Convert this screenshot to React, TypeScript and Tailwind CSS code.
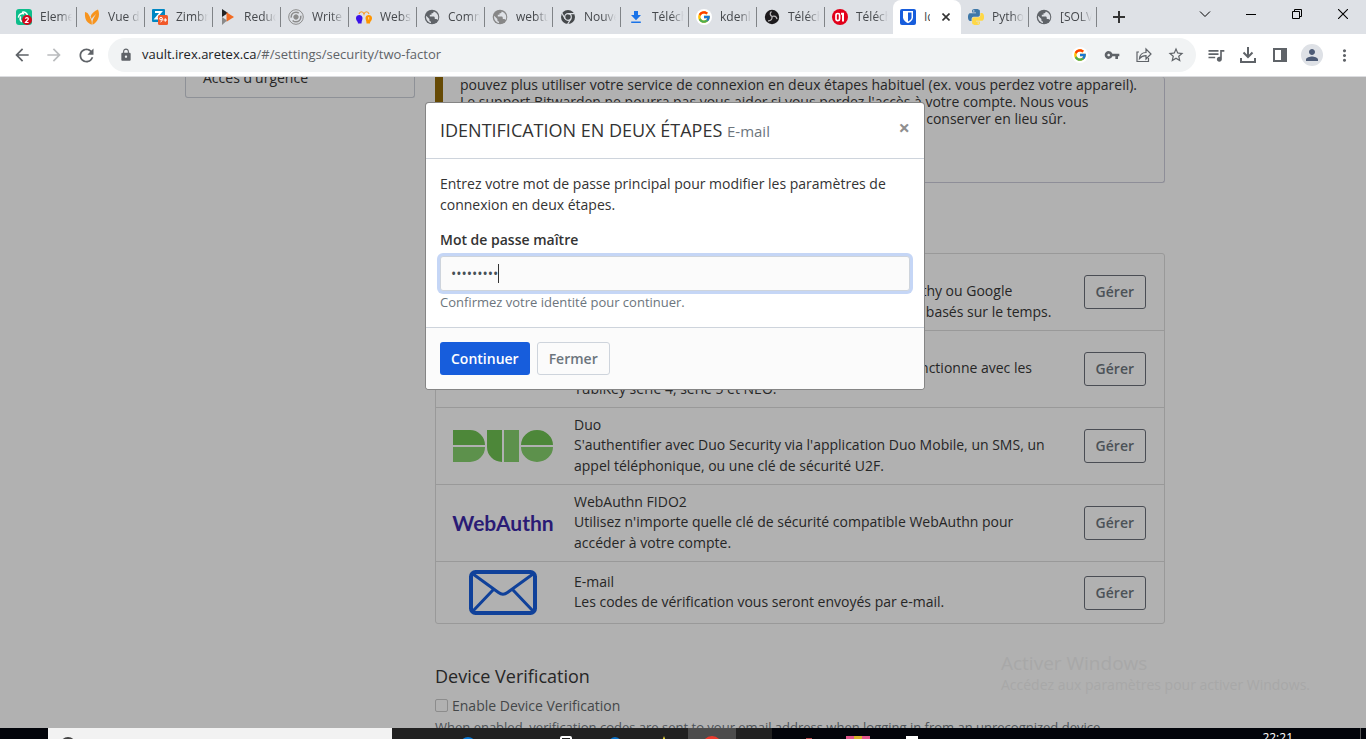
import React, { useEffect, useRef } from 'react';
import {
  MdArrowBack,
  MdArrowForward,
  MdLock,
  MdMoreVert,
  MdPerson,
  MdQueueMusic,
  MdRefresh,
  MdStarBorder,
  MdVpnKey,
} from 'react-icons/md';
import { FcGoogle } from 'react-icons/fc';

interface Tab {
  title: string;
  icon: React.ReactNode;
  active?: boolean;
  separator?: boolean;
}

interface Provider {
  name: string;
  description: string;
  logo: React.ReactNode;
}

const PYTHON_SNAKE =
  'M14.25.18l.9.2.73.26.59.3.45.32.34.34.25.34.16.33.1.3.04.26.02.2-.01.13V8.5l-.05.63-.13.55-.21.46-.26.38-.3.31-.33.25-.35.19-.35.14-.33.1-.3.07-.26.04-.21.02H8.77l-.69.05-.59.14-.5.22-.41.27-.33.32-.27.35-.2.36-.15.37-.1.35-.07.32-.04.27-.02.21v3.06H3.17l-.21-.03-.28-.07-.32-.12-.35-.18-.36-.26-.36-.36-.35-.46-.32-.59-.28-.73-.21-.88-.14-1.05-.05-1.23.06-1.22.16-1.04.24-.87.32-.71.36-.57.4-.44.42-.33.42-.24.4-.16.36-.1.32-.05.24-.01h.16l.06.01h8.16v-.83H6.18l-.01-2.75-.02-.37.05-.34.11-.31.17-.28.25-.26.31-.23.38-.2.44-.18.51-.15.58-.12.64-.1.71-.06.77-.04.84-.02 1.27.05zm-6.3 1.98l-.23.33-.08.41.08.41.23.34.33.22.41.09.41-.09.33-.22.23-.34.08-.41-.08-.41-.23-.33-.33-.22-.41-.09-.41.09z';

function ElementIcon() {
  return (
    <svg viewBox="0 0 16 16" className="size-4">
      <rect width="16" height="16" rx="3" fill="#0dbd8b" />
      <g fill="none" stroke="#fff" strokeWidth="1.5" strokeLinecap="round">
        <path d="M6.5 3.2a4 4 0 0 1 5 3.500M2.500 8a4 4 0 0 1 5-3.300M5.500 12.500a4 4 0 0 1-1-4.500" />
      </g>
      <circle cx="11" cy="11" r="5" fill="#d4061c" />
      <path d="M9.400 9.800c.2-1.600 3-1.500 2.900.1 0 1.200-2 2-2.900 3.600h3.200" fill="none" stroke="#fff" strokeWidth="1.2" />
    </svg>
  );
}

function LeafIcon() {
  return (
    <svg viewBox="0 0 16 16" className="size-4" fill="#f7941e">
      <path d="M1 3c2 .3 3.300 1.500 4.200 3.500L7.300 11c.6 1.800.7 3.500.4 4.800C5 14.500 2.500 13 1.600 10 .9 7.800.8 5.500 1 3z" />
      <path d="M14 .5c1.300 3 1.400 6.500 0 9.500-1 2.500-3 4.500-5.500 5.700C8.200 13 8.500 11 10 8.500L12 5 8.500 8.500 7.700 10 6.600 7.500C7.500 4.500 10.500 2 14 .5z" />
    </svg>
  );
}

function ZimbraIcon() {
  return (
    <svg viewBox="0 0 16 16" className="size-4">
      <rect width="13" height="13" rx="1" fill="#0087c3" />
      <path d="M3 3h6L3.500 9.500H7" fill="none" stroke="#fff" strokeWidth="1.8" />
      <rect x="6" y="6" width="10" height="10" rx="1.500" fill="#f1592a" />
      <circle cx="9" cy="9.600" r="1.300" fill="none" stroke="#fff" />
      <path d="M10.300 9.500c0 2-.5 3.200-1.800 3.500M11.500 11h3.500M13.250 9.250v3.500" fill="none" stroke="#fff" />
    </svg>
  );
}

function PlayIcon() {
  return (
    <svg viewBox="0 0 16 16" className="size-4">
      <path d="M2 0l6 4-6 4z" fill="#222" />
      <path d="M6.500 3.200l7.500 4.800-7.500 4.800z" fill="#f26a21" />
      <path d="M2 8l5 3.500L2 16z" fill="#8a8a8a" />
    </svg>
  );
}

function SwirlIcon() {
  return (
    <svg viewBox="0 0 16 16" className="size-4" fill="none" stroke="#8b8b8b">
      <circle cx="8" cy="8" r="7.300" strokeWidth="1" />
      <circle cx="8" cy="8" r="4.800" strokeWidth="1.500" strokeDasharray="11 3" />
      <circle cx="8" cy="8" r="2.200" fill="#8b8b8b" />
    </svg>
  );
}

function HeadsIcon() {
  return (
    <svg viewBox="0 0 16 16" className="size-4">
      <path d="M3 5c1-3 4-3 5 0 1-3 4-3 5 0" fill="none" stroke="#f79a2b" strokeWidth="1.200" />
      <path d="M0 9c0-4 6.500-4 6.500 0 0 2-1 2.500-1 5.500H2C2 12 0 12 0 9z" fill="#3b12e8" />
      <path d="M16 9c0-4-6.500-4-6.500 0 0 2 1 2.500 1 5.500H14c0-2.500 2-2.500 2-5.500z" fill="#ff9500" />
      <path d="M12.700 8v2.500" stroke="#fff" strokeWidth=".6" />
    </svg>
  );
}

function GlobeIcon({ color }: { color: string }) {
  return (
    <svg viewBox="0 0 16 16" className="size-4">
      <circle cx="8" cy="8" r="7.300" fill={color} />
      <path
        d="M9.800 2.400c-.3 1.300-.9 1.800-2.300 1.800v1.600H5.800v1.700h4.100c.8 0 .9.900.9 2.500h1.400c.6 0 .9.400 1.300 1A6 6 0 0 0 9.800 2.400zM2.200 6.700C1.500 9.800 3.700 13.300 7 13.900v-1.400c-.9 0-1.600-.7-1.600-1.600v-1z"
        fill="#dee1e6"
      />
    </svg>
  );
}

function ChromeIcon() {
  return (
    <svg viewBox="0 0 16 16" className="size-4">
      <circle cx="8" cy="8" r="7" fill="#45484b" />
      <circle cx="8" cy="8" r="3.300" fill="#45484b" stroke="#dee1e6" strokeWidth="1.200" />
      <path d="M8 4.700h6.500M5.100 9.700L2 4.200M10.900 9.700L7.600 15.200" stroke="#dee1e6" strokeWidth="1.200" />
    </svg>
  );
}

function DownloadArrow() {
  return (
    <svg viewBox="0 0 16 16" className="size-4" fill="#1a73e8">
      <path d="M6 2h4v4h3l-5 5.200L3 6h3zM3.200 12.500h9.600V14H3.200z" />
    </svg>
  );
}

function ObsIcon() {
  return (
    <svg viewBox="0 0 16 16" className="size-4">
      <circle cx="8" cy="8" r="7.200" fill="#1d1a1d" />
      <path
        d="M7.500 2.500c-2 1.500-1.500 4 .5 5 2.500-1 4.500 0 5 2.500M8 7.500c.5 2.500-1 4.500-4 4.300"
        fill="none"
        stroke="#b9b6b9"
        strokeWidth="1.300"
      />
    </svg>
  );
}

function ZeroOneIcon() {
  return (
    <svg viewBox="0 0 16 16" className="size-4">
      <circle cx="8" cy="8" r="8" fill="#e2001a" />
      <rect x="4" y="4.500" width="3.600" height="7.200" rx="1.600" fill="none" stroke="#fff" strokeWidth="1.700" />
      <path d="M9 4.800h2v7.700" fill="none" stroke="#fff" strokeWidth="2" />
    </svg>
  );
}

function BitwardenIcon() {
  return (
    <svg viewBox="0 0 16 16" className="size-4">
      <rect width="16" height="16" rx="2" fill="#175ddc" />
      <path d="M3 2h10v6.500c0 2.500-2.500 4.500-5 5.700-2.500-1.200-5-3.200-5-5.700z" fill="#fff" />
      <path d="M8 3.500h3.500v5c0 1.600-1.600 3-3.500 4z" fill="#175ddc" />
    </svg>
  );
}

function PythonIcon() {
  return (
    <svg viewBox="0 0 24 24" className="size-4">
      <path d={PYTHON_SNAKE} fill="#3f78a8" />
      <path d={PYTHON_SNAKE} fill="#ffd845" transform="rotate(180 12 12)" />
    </svg>
  );
}

function GoogleIcon() {
  return (
    <span className="flex size-4 items-center justify-center rounded-full bg-white">
      <FcGoogle className="size-[14px]" />
    </span>
  );
}

const tabs: Tab[] = [
  { title: 'Element', icon: <ElementIcon />, separator: true },
  { title: 'Vue d’ensemble', icon: <LeafIcon />, separator: true },
  { title: 'Zimbra', icon: <ZimbraIcon />, separator: true },
  { title: 'Reduce', icon: <PlayIcon />, separator: true },
  { title: 'Write', icon: <SwirlIcon />, separator: true },
  { title: 'Webshare', icon: <HeadsIcon />, separator: true },
  { title: 'Comment', icon: <GlobeIcon color="#5f6368" />, separator: true },
  { title: 'webtuto', icon: <GlobeIcon color="#878787" />, separator: true },
  { title: 'Nouvel', icon: <ChromeIcon />, separator: true },
  { title: 'Télécharger', icon: <DownloadArrow />, separator: true },
  { title: 'kdenlive', icon: <GoogleIcon />, separator: true },
  { title: 'Télécharger', icon: <ObsIcon />, separator: true },
  { title: 'Télécharger', icon: <ZeroOneIcon /> },
  { title: 'Identification', icon: <BitwardenIcon />, active: true },
  { title: 'Python', icon: <PythonIcon />, separator: true },
  { title: '[SOLVED]', icon: <GlobeIcon color="#5f6368" />, separator: true },
];

function BrowserTab({ tab }: { tab: Tab }) {
  if (tab.active) {
    return (
      <div className="flex w-[68px] shrink-0 items-center rounded-t-lg bg-white px-[7px]">
        <span className="flex size-4 shrink-0 items-center justify-center">{tab.icon}</span>
        <span className="ml-2 w-[6px] overflow-hidden whitespace-nowrap">{tab.title}</span>
        <button aria-label="Fermer l’onglet" className="ml-auto flex size-4 items-center justify-center">
          <svg viewBox="0 0 8 8" className="size-2" stroke="#333" strokeWidth="1.6">
            <path d="M.5.5l7 7M7.500.5l-7 7" />
          </svg>
        </button>
      </div>
    );
  }
  return (
    <div className="flex w-[68px] shrink-0 items-center pl-[7px]">
      <span className="flex size-4 shrink-0 items-center justify-center">{tab.icon}</span>
      <span className="ml-2 flex-1 overflow-hidden whitespace-nowrap [mask-image:linear-gradient(to_right,black_60%,transparent)]">
        {tab.title}
      </span>
      <span className={tab.separator ? 'ml-1 h-5 w-px bg-[#808387]' : 'ml-1 h-5 w-px'} />
    </div>
  );
}

function TabStrip() {
  return (
    <div className="flex h-[34px] shrink-0 bg-[#dee1e6] pl-[9px] text-xs text-[#45484c]">
      {tabs.map((tab, i) => (
        <BrowserTab key={i} tab={tab} />
      ))}
      <button aria-label="Nouvel onglet" className="flex w-11 items-center justify-center">
        <svg viewBox="0 0 12 12" className="size-3" stroke="#333" strokeWidth="2">
          <path d="M6 0v12M0 6h12" />
        </svg>
      </button>
      <div className="ml-auto flex h-7 text-black">
        <button aria-label="Rechercher dans les onglets" className="flex w-[46px] items-center justify-center">
          <svg viewBox="0 0 12 12" className="size-3" fill="none" stroke="currentColor">
            <path d="M1 3.500l5 5 5-5" />
          </svg>
        </button>
        <button aria-label="Réduire" className="flex w-[46px] items-center justify-center">
          <span className="h-px w-[10px] bg-black" />
        </button>
        <button aria-label="Restaurer" className="flex w-[46px] items-center justify-center">
          <svg viewBox="0 0 10 10" className="size-[10px]" fill="none" stroke="currentColor">
            <path d="M.5 2.500h7v7h-7zM2.500 2.500v-2h7v7h-2" />
          </svg>
        </button>
        <button aria-label="Fermer" className="flex w-[46px] items-center justify-center">
          <svg viewBox="0 0 10 10" className="size-[10px]" fill="none" stroke="currentColor" strokeWidth="1.1">
            <path d="M0 0l10 10M10 0L0 10" />
          </svg>
        </button>
      </div>
    </div>
  );
}

function ToolButton({ label, children }: { label: string; children: React.ReactNode }) {
  return (
    <button aria-label={label} className="flex h-8 w-8 shrink-0 items-center justify-center">
      {children}
    </button>
  );
}

function Toolbar() {
  return (
    <div className="flex h-[43px] shrink-0 items-center border-b border-[#dcdde0] bg-white pr-[6px] pl-[6px] text-[#5f6368]">
      <ToolButton label="Retour">
        <MdArrowBack className="size-5" />
      </ToolButton>
      <ToolButton label="Avancer">
        <MdArrowForward className="size-5 text-[#babcbe]" />
      </ToolButton>
      <ToolButton label="Actualiser">
        <MdRefresh className="size-[21px]" />
      </ToolButton>
      <div className="mr-1 ml-[6px] flex h-[34px] flex-1 items-center rounded-full bg-[#f1f3f4] pr-1 pl-[11px]">
        <MdLock className="size-[14px]" />
        <a href="#/settings/security/two-factor" className="ml-[9px] flex-1 text-[13px] text-[#5f6368]">
          <span className="text-[#202124]">vault.irex.aretex.ca</span>/#/settings/security/two-factor
        </a>
        <ToolButton label="Google">
          <GoogleIcon />
        </ToolButton>
        <ToolButton label="Gérer les mots de passe">
          <MdVpnKey className="size-4" />
        </ToolButton>
        <ToolButton label="Partager">
          <svg viewBox="0 0 16 16" className="size-4" fill="none" stroke="currentColor" strokeWidth="1.2">
            <path d="M3 5H1v9.500h11.500V11" />
            <path d="M3.500 11.500c.5-4 3-6 6.500-6V2l5 5-5 5V8.700c-3 0-5 1-6.500 2.800z" />
          </svg>
        </ToolButton>
        <ToolButton label="Ajouter aux favoris">
          <MdStarBorder className="size-[18px]" />
        </ToolButton>
      </div>
      <ToolButton label="Lecture">
        <MdQueueMusic className="size-5" />
      </ToolButton>
      <ToolButton label="Téléchargements">
        <svg viewBox="0 0 16 16" className="size-4" fill="none" stroke="currentColor" strokeWidth="2">
          <path d="M8 0v9.500M3.500 5.500L8 10l4.500-4.500M1 11v4h14v-4" />
        </svg>
      </ToolButton>
      <ToolButton label="Panneau latéral">
        <svg viewBox="0 0 14 14" className="size-[14px]" fill="currentColor">
          <path d="M0 0h14v14H0zM2 2v10h6V2z" fillRule="evenodd" />
        </svg>
      </ToolButton>
      <ToolButton label="Profil">
        <span className="flex size-[22px] items-center justify-center rounded-full bg-[#dee1e6]">
          <MdPerson className="size-[18px] text-[#4d5b76]" />
        </span>
      </ToolButton>
      <ToolButton label="Menu">
        <MdMoreVert className="size-[19px]" />
      </ToolButton>
    </div>
  );
}

function DuoLogo() {
  return (
    <svg viewBox="0 0 100 32" className="h-8 w-[100px]">
      <g fill="#4d8739">
        <path d="M0 0h17a15 15 0 0 1 15 15H0zM34 0h15v32a15 15 0 0 1-15-15zM68 15a16 15 0 0 1 32 0z" />
      </g>
      <g fill="#5d914c">
        <path d="M0 17h32a15 15 0 0 1-15 15H0zM51 0h15v32H51zM68 17a16 15 0 0 0 32 0z" />
      </g>
    </svg>
  );
}

function EmailLogo() {
  return (
    <svg viewBox="0 0 68 45" className="h-[45px] w-[68px]" fill="none" stroke="#10419a">
      <rect x="2" y="2" width="64" height="41" rx="4.500" strokeWidth="4" />
      <path d="M4 4l25.500 18.500q4.500 3.500 9 0L64 4M4 41l20-21M64 41L44 20" strokeWidth="3" />
    </svg>
  );
}

function PhoneLogo() {
  return (
    <svg viewBox="0 0 30 46" className="h-[46px] w-[30px]" fill="none" stroke="#10419a" strokeWidth="3">
      <rect x="2" y="2" width="26" height="42" rx="4" />
      <path d="M2 36h26" />
    </svg>
  );
}

function KeyLogo() {
  return (
    <svg viewBox="0 0 60 24" className="h-6 w-[60px]" fill="none" stroke="#5d7f26" strokeWidth="3">
      <rect x="2" y="2" width="40" height="20" rx="4" />
      <circle cx="22" cy="12" r="5" />
      <path d="M42 6h16v12H42" />
    </svg>
  );
}

const providers: Provider[] = [
  {
    name: "Application d'authentification",
    description:
      "Utilisez une application d'authentification (comme Authy ou Google Authenticator) pour générer des codes de vérification basés sur le temps.",
    logo: <PhoneLogo />,
  },
  {
    name: 'Clé de sécurité YubiKey OTP',
    description:
      'Utilisez une YubiKey pour accéder à votre compte. Fonctionne avec les YubiKey série 4, série 5 et NEO.',
    logo: <KeyLogo />,
  },
  {
    name: 'Duo',
    description:
      "S'authentifier avec Duo Security via l'application Duo Mobile, un SMS, un appel téléphonique, ou une clé de sécurité U2F.",
    logo: <DuoLogo />,
  },
  {
    name: 'WebAuthn FIDO2',
    description: "Utilisez n'importe quelle clé de sécurité compatible WebAuthn pour accéder à votre compte.",
    logo: <span className="font-[Lato,sans-serif] text-[21px] font-bold text-[#2a1b75]">WebAuthn</span>,
  },
  {
    name: 'E-mail',
    description: 'Les codes de vérification vous seront envoyés par e-mail.',
    logo: <EmailLogo />,
  },
];

function ProviderRow({ provider }: { provider: Provider }) {
  return (
    <li className="flex items-center border-b border-[#999] py-2 pr-[18px] pl-[17px] last:border-b-0">
      <div className="flex w-[100px] shrink-0 justify-center">{provider.logo}</div>
      <div className="ml-[21px] w-[490px]">
        <h3 className="leading-[18px]">{provider.name}</h3>
        <p className="leading-[21px]">{provider.description}</p>
      </div>
      <button className="ml-auto h-[34px] rounded-[3px] border border-[#4a4d54] px-[11px] font-semibold text-[#4c5257]">
        Gérer
      </button>
    </li>
  );
}

function SettingsPage() {
  return (
    <div className="mx-auto flex w-full max-w-[980px] items-start gap-5">
      <nav className="flex h-[21px] w-[230px] shrink-0 items-end overflow-hidden rounded-b-[3px] border border-t-0 border-[#8e9197] px-[17px] pb-[9px]">
        <a href="#/settings/emergency-access" className="leading-[21px]">
          Accès d'urgence
        </a>
      </nav>
      <main className="flex-1">
        <section className="flex h-[106px] flex-col items-start justify-end overflow-hidden rounded-r-[3px] border border-t-0 border-l-8 border-[#8e8e98] border-l-[#664a05] px-[17px] pb-[17px]">
          <p className="shrink-0 leading-[17px] whitespace-nowrap">
            pouvez plus utiliser votre service de connexion en deux étapes habituel (ex. vous perdez votre appareil).
            <br />
            Le support Bitwarden ne pourra pas vous aider si vous perdez l'accès à votre compte. Nous vous
            <br />
            recommandons d'écrire ou d'imprimer le code de récupération et de le conserver en lieu sûr.
          </p>
          <button className="mt-1 h-[34px] shrink-0 rounded-[3px] border border-[#664a05] px-[10px] font-semibold">
            Code de récupération
          </button>
        </section>
        <h2 className="mt-8 mb-[17px] text-lg leading-[21px]">Fournisseurs</h2>
        <ul className="rounded-[3px] border border-[#999]">
          {providers.map(p => (
            <ProviderRow key={p.name} provider={p} />
          ))}
        </ul>
        <h2 className="mt-10 text-lg leading-6">Device Verification</h2>
        <div className="mt-[7px] flex items-center gap-1 text-[#444749]">
          <input
            id="device-verification"
            type="checkbox"
            className="size-[13px] appearance-none rounded-[2px] border border-[#8c8c8c]"
          />
          <label htmlFor="device-verification" className="leading-[21px]">
            Enable Device Verification
          </label>
        </div>
        <p className="mt-px text-[13px] leading-5 whitespace-nowrap text-[#4c5257]">
          When enabled, verification codes are sent to your email address when logging in from an unrecognized device
        </p>
      </main>
    </div>
  );
}

function PasswordDialog() {
  const inputRef = useRef<HTMLInputElement>(null);

  useEffect(() => {
    inputRef.current?.focus();
    inputRef.current?.setSelectionRange(9, 9);
  }, []);

  return (
    <div className="absolute inset-0 flex items-start justify-center pt-[26px] pr-4">
      <form
        role="dialog"
        aria-labelledby="dialog-title"
        onSubmit={e => e.preventDefault()}
        className="w-[498px] overflow-hidden rounded-[3px] bg-white text-[#333] shadow-[0_0_0_1px_#858585]"
      >
        <header className="flex h-14 items-start border-b border-[#ced4dc] px-[14px] pt-[14px]">
          <h2 id="dialog-title" className="text-lg leading-[27px]">
            IDENTIFICATION EN DEUX ÉTAPES <small className="text-[15px] text-[#6c757d]">E-mail</small>
          </h2>
          <button type="button" aria-label="Fermer" className="ml-auto text-xl leading-[21px] font-bold text-[#8f8f8f]">
            ×
          </button>
        </header>
        <div className="px-[14px] pt-[14px] pb-[15px]">
          <p className="leading-[21px]">
            Entrez votre mot de passe principal pour modifier les paramètres de connexion en deux étapes.
          </p>
          <label htmlFor="master-password" className="mt-[14px] block leading-[21px] font-semibold">
            Mot de passe maître
          </label>
          <div className="relative mt-[6px]">
            <input
              ref={inputRef}
              id="master-password"
              type="password"
              defaultValue="azertyuio"
              className="block h-[35px] w-full rounded-[3px] border border-[#ced4dc] bg-[#fbfbfb] px-[10px] text-[#465057] caret-transparent shadow-[0_0_0_3px_#c5d6f6] outline-none"
            />
            {/* text cursor */}
            <span className="absolute top-2 left-[58px] h-[19px] w-px bg-[#333]" />
          </div>
          <small className="mt-px block text-[13px] leading-5 text-[#6c757d]">
            Confirmez votre identité pour continuer.
          </small>
        </div>
        <footer className="flex gap-[7px] border-t border-[#ced4dc] bg-[#fbfbfb] p-[14px]">
          <button type="submit" className="h-[33px] rounded-[3px] bg-[#175ddc] px-[11px] font-semibold text-white">
            Continuer
          </button>
          <button
            type="button"
            className="h-[33px] rounded-[3px] border border-[#ced4dc] px-[11px] font-semibold text-[#6c757d]"
          >
            Fermer
          </button>
        </footer>
      </form>
    </div>
  );
}

function TaskSlot({ children }: { children?: React.ReactNode }) {
  return <div className="flex w-[49px] shrink-0 justify-center">{children}</div>;
}

function Taskbar() {
  return (
    <div className="flex h-[11px] shrink-0 items-start overflow-hidden bg-[#02040a]">
      <div className="ml-12 flex h-[11px] w-[344px] shrink-0 bg-[#f2f2f2] pl-3">
        <span className="mt-[9px] size-4 rounded-full border-2 border-[#444]" />
      </div>
      <div className="flex h-[11px] w-[380px] shrink-0 bg-[#212121] pl-[2px]">
        <TaskSlot />
        <TaskSlot>
          <span className="mt-[9px] size-4 rounded-full bg-[#0a78d4]" />
        </TaskSlot>
        <TaskSlot />
        <TaskSlot>
          <span className="mt-2 h-4 w-3 rounded-[2px] border-2 border-white" />
        </TaskSlot>
        <TaskSlot>
          <span className="mt-[9px] size-3 rounded-full bg-[#0a6fc4]" />
        </TaskSlot>
        <TaskSlot>
          <svg viewBox="0 0 8 8" className="mt-2 size-2" fill="#f5e03a">
            <path d="M4 0l3 8H1z" />
          </svg>
        </TaskSlot>
        <div className="flex w-12 shrink-0 justify-center bg-[#4c4c4c]">
          <span className="mt-2 size-5 rounded-full bg-[#ea3a2d]" />
        </div>
      </div>
      <div className="ml-3 flex">
        <TaskSlot>
          <span className="mt-[10px] size-[6px] bg-[#b04a4a]" />
        </TaskSlot>
        <TaskSlot>
          <span className="mt-2 flex h-4 w-6 justify-center bg-[#e0568c]">
            <span className="h-4 w-2 bg-[#d8b32c]" />
          </span>
        </TaskSlot>
        <div className="flex w-[60px] justify-center">
          <span className="mt-2 h-4 w-3 bg-white" />
        </div>
      </div>
      <time className="mt-[3px] mr-[67px] ml-auto text-xs leading-[14px] text-white">22:21</time>
      <span className="mr-[5px] h-[11px] w-px bg-[#555]" />
    </div>
  );
}

export default function App() {
  return (
    <div className="flex h-screen flex-col overflow-hidden font-['Open_Sans',sans-serif]">
      <TabStrip />
      <Toolbar />
      <div className="relative min-h-0 flex-1 overflow-hidden bg-[#b1b1b1] pr-4 text-sm text-[#262626]">
        <SettingsPage />
        <PasswordDialog />
        <div className="absolute right-14 bottom-[33px] text-[#a8a8a8]">
          <p className="text-[19px] leading-6">Activer Windows</p>
          <p className="text-sm leading-5">Accédez aux paramètres pour activer Windows.</p>
        </div>
      </div>
      <Taskbar />
    </div>
  );
}
